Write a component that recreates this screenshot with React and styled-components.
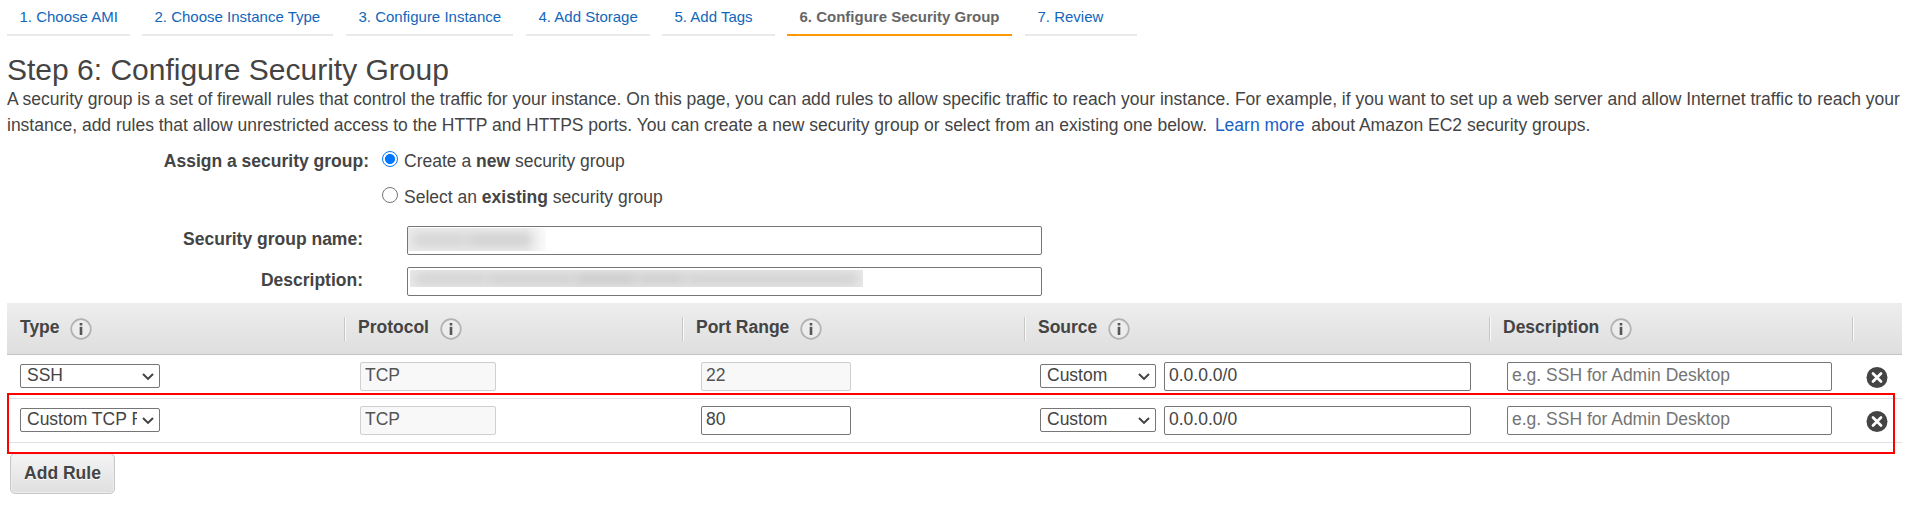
import React from "react";
import styled, { createGlobalStyle } from "styled-components";

const Global = createGlobalStyle`
  * { box-sizing: border-box; }
  body {
    margin: 0;
    background: #fff;
    color: #444;
    font-family: "Liberation Sans", Arial, sans-serif;
    font-size: 17.5px;
  }
  input, select, button { font: inherit; color: inherit; margin: 0; }
`;

const Page = styled.main`
  padding: 0 7px;
  height: 507px;
  overflow: hidden;
`;

const Steps = styled.nav`
  display: flex;
  height: 36px;
`;

const Step = styled.a`
  width: ${(p) => p.$w}px;
  margin-right: ${(p) => p.$gap}px;
  padding-left: 12.5px;
  border-bottom: 2px solid ${(p) => (p.$active ? "#ff9900" : "#eaeaea")};
  color: ${(p) => (p.$active ? "#666" : "#1166bb")};
  font-weight: ${(p) => (p.$active ? 700 : 400)};
  font-size: 15px;
  line-height: 34px;
  white-space: nowrap;
`;

const Title = styled.h1`
  margin: 17px 0 0;
  height: 33px;
  font-size: 30px;
  line-height: 34px;
  font-weight: 400;
  white-space: nowrap;
`;

const Intro = styled.p`
  margin: 0;
  line-height: 26px;
  white-space: nowrap;
`;

const Link = styled.a`
  color: #1a5fc4;
  margin: 0 2px 0 3px;
`;

const Form = styled.form`
  padding-top: 11px;
`;

const FieldRow = styled.div`
  display: flex;
  align-items: flex-start;
  height: ${(p) => p.$h}px;
`;

const Label = styled.label`
  width: ${(p) => p.$w}px;
  margin-right: ${(p) => p.$gap}px;
  text-align: right;
  font-weight: 700;
  line-height: ${(p) => p.$lh || 24}px;
`;

const RadioLabel = styled.label`
  display: flex;
  line-height: 24px;
  white-space: pre;
`;

const Radio = styled.input`
  appearance: none;
  width: 16px;
  height: 16px;
  margin: 2px 6px 0 0;
  border: 1px solid #767676;
  border-radius: 50%;
  background: #fff;
  &:checked {
    border-color: #0075ff;
    background: radial-gradient(circle, #0075ff 4.6px, #fff 5.4px);
  }
`;

const TextBox = styled.input`
  display: block;
  width: ${(p) => p.$w}px;
  height: 29px;
  margin-left: ${(p) => p.$ml || 0}px;
  padding: 0 4px 2px;
  border: 1px solid #767676;
  border-radius: 2px;
  background: #fff;
  outline: none;
  &:disabled {
    border-color: #cfcfcf;
    background: #f8f8f8;
    color: #545454;
  }
  &::placeholder { color: #757575; opacity: 1; }
`;

const RedactedBox = styled.div`
  width: 635px;
  height: 29px;
  padding: ${(p) => p.$pad};
  border: 1px solid #767676;
  border-radius: 2px;
`;

const Redaction = styled.div`
  display: flex;
  align-items: center;
  width: ${(p) => p.$w}px;
  height: ${(p) => p.$h}px;
  padding: 0 ${(p) => p.$edge}px 0 4px;
  overflow: hidden;
  background: ${(p) => p.$bg};
`;

const Smudge = styled.span`
  flex: ${(p) => p.$grow};
  height: 12px;
  background: ${(p) => p.$tone};
  filter: blur(6px);
`;

const Table = styled.section`
  position: relative;
  margin-top: 7px;
`;

const columns = "337px 338px 342px 465px 363px 1fr";

const HeadRow = styled.div`
  display: grid;
  grid-template-columns: ${columns};
  align-items: center;
  height: 52px;
  border-bottom: 1px solid #c4c4c4;
  background: linear-gradient(#eeeeee, #dedede);
`;

const HeadCell = styled.div`
  display: flex;
  align-items: center;
  height: 24px;
  padding-left: 13px;
  border-left: ${(p) => (p.$first ? "0" : "1px solid #c6c6c6")};
  box-shadow: ${(p) => (p.$first ? "none" : "inset 1px 0 #fafafa")};
  font-weight: 700;
  svg { margin-left: ${(p) => (p.$first ? 10 : 11)}px; }
`;

const HeadText = styled.span`
  padding-bottom: 2px;
`;

const RuleRow = styled.div`
  display: grid;
  grid-template-columns: ${columns};
  height: 44px;
  padding-top: 7px;
  border-bottom: 1px solid #e0e0e0;
`;

const Cell = styled.div`
  display: flex;
  align-items: flex-start;
  padding-left: ${(p) => p.$pl}px;
`;

const SelectWrap = styled.span`
  display: grid;
  width: ${(p) => p.$w}px;
  height: 24px;
  margin-top: 2px;
  border: 1px solid #767676;
  border-radius: 2px;
  grid-template-columns: 1fr 22px;
  align-items: center;
  svg { display: block; margin-left: 4px; }
`;

const Select = styled.select`
  appearance: none;
  width: 100%;
  height: 22px;
  padding: 0 0 2px 6px;
  border: 0;
  background: transparent;
  outline: none;
`;

const RemoveButton = styled.button`
  width: 22px;
  height: 22px;
  margin-top: 5px;
  padding: 0;
  border: 0;
  background: none;
  svg { display: block; }
`;

const Highlight = styled.div`
  position: absolute;
  left: 0;
  top: 90px;
  width: 1888px;
  height: 61px;
  border: 2px solid #fe0000;
  pointer-events: none;
`;

const AddButton = styled.button`
  display: block;
  width: 105px;
  height: 41px;
  margin: 10px 0 0 3px;
  padding: 0;
  border: 1px solid #c8c8c8;
  border-radius: 5px;
  background: linear-gradient(#f4f4f4, #dfdfdf);
  box-shadow: inset 0 0 0 1px #ececec;
  color: #444;
  font-weight: 700;
  text-shadow: 0 1px #fff;
`;

const InfoIcon = () => (
  <svg width="22" height="22" viewBox="0 0 22 22">
    <circle cx="11" cy="11" r="9.8" fill="#ececec" stroke="#b2b2b2" strokeWidth="1.7" />
    <rect x="9.7" y="5" width="2.6" height="2.4" fill="#555" />
    <rect x="9.7" y="8.8" width="2.6" height="8.2" fill="#555" />
  </svg>
);

const Chevron = () => (
  <svg width="14" height="12" viewBox="0 0 14 12">
    <path d="M2 4L7 8.9L12 4" fill="none" stroke="#444" strokeWidth="2.1" />
  </svg>
);

const RemoveIcon = () => (
  <svg width="22" height="22" viewBox="0 0 22 22">
    <circle cx="11" cy="10.5" r="10.5" fill="#444" />
    <path d="M7 6.5L15 14.5M15 6.5L7 14.5" stroke="#fff" strokeWidth="2.7" strokeLinecap="round" />
  </svg>
);

const Dropdown = ({ w, value }) => (
  <SelectWrap $w={w}>
    <Select defaultValue={value}>
      <option>{value}</option>
    </Select>
    <Chevron />
  </SelectWrap>
);

const steps = [
  ["1. Choose AMI", 123, 12],
  ["2. Choose Instance Type", 191, 13],
  ["3. Configure Instance", 167, 13],
  ["4. Add Storage", 124, 12],
  ["5. Add Tags", 113, 12],
  ["6. Configure Security Group", 225, 13],
  ["7. Review", 112, 0],
];

const heads = ["Type", "Protocol", "Port Range", "Source", "Description"];

const rules = [
  { type: "SSH", port: "22", locked: true },
  { type: "Custom TCP Rule", port: "80", locked: false },
];

export default function App() {
  return (
    <Page>
      <Global />
      <Steps>
        {steps.map(([name, w, gap], i) => (
          <Step key={name} $w={w} $gap={gap} $active={i === 5}>{name}</Step>
        ))}
      </Steps>
      <Title>Step 6: Configure Security Group</Title>
      <Intro>
        A security group is a set of firewall rules that control the traffic for your instance. On this page, you can add rules to allow specific traffic to reach your instance. For example, if you want to set up a web server and allow Internet traffic to reach your
        <br />
        instance, add rules that allow unrestricted access to the HTTP and HTTPS ports. You can create a new security group or select from an existing one below. <Link>Learn more</Link> about Amazon EC2 security groups.
      </Intro>
      <Form>
        <FieldRow $h={36}>
          <Label $w={362} $gap={13}>Assign a security group:</Label>
          <RadioLabel><Radio type="radio" name="group" defaultChecked />Create a <b>new</b> security group</RadioLabel>
        </FieldRow>
        <FieldRow $h={41}>
          <Label $w={362} $gap={13} />
          <RadioLabel><Radio type="radio" name="group" />Select an <b>existing</b> security group</RadioLabel>
        </FieldRow>
        <FieldRow $h={41}>
          <Label $w={356} $gap={44} $lh={26}>Security group name:</Label>
          <RedactedBox $pad="1px 0 0 0">
            <Redaction $w={138} $h={23} $edge={14} $bg="linear-gradient(90deg, #ededed 85%, #fafafa)">
              <Smudge $grow={5} $tone="#d0d0d0" />
              <Smudge $grow={6} $tone="#cbcbcb" />
            </Redaction>
          </RedactedBox>
        </FieldRow>
        <FieldRow $h={29}>
          <Label $w={356} $gap={44} $lh={26}>Description:</Label>
          <RedactedBox $pad="2px 0 0 2px">
            <Redaction $w={453} $h={17} $edge={4} $bg="#ebebeb">
              <Smudge $grow={6} $tone="#d0d0d0" />
              <Smudge $grow={7} $tone="#cdcdcd" />
              <Smudge $grow={5} $tone="#c6c6c6" />
              <Smudge $grow={4} $tone="#cacaca" />
              <Smudge $grow={14} $tone="#cecece" />
            </Redaction>
          </RedactedBox>
        </FieldRow>
      </Form>
      <Table>
        <HeadRow>
          {heads.map((h, i) => (
            <HeadCell key={h} $first={i === 0}><HeadText>{h}</HeadText><InfoIcon /></HeadCell>
          ))}
          <HeadCell />
        </HeadRow>
        {rules.map((r) => (
          <RuleRow key={r.type}>
            <Cell $pl={13}><Dropdown w={140} value={r.type} /></Cell>
            <Cell $pl={16}><TextBox $w={136} defaultValue="TCP" disabled /></Cell>
            <Cell $pl={19}><TextBox $w={150} defaultValue={r.port} disabled={r.locked} /></Cell>
            <Cell $pl={16}>
              <Dropdown w={116} value="Custom" />
              <TextBox $w={307} $ml={8} defaultValue="0.0.0.0/0" />
            </Cell>
            <Cell $pl={18}><TextBox $w={325} placeholder="e.g. SSH for Admin Desktop" /></Cell>
            <Cell $pl={14}><RemoveButton aria-label="Remove rule"><RemoveIcon /></RemoveButton></Cell>
          </RuleRow>
        ))}
        <Highlight />
      </Table>
      <AddButton>Add Rule</AddButton>
    </Page>
  );
}
